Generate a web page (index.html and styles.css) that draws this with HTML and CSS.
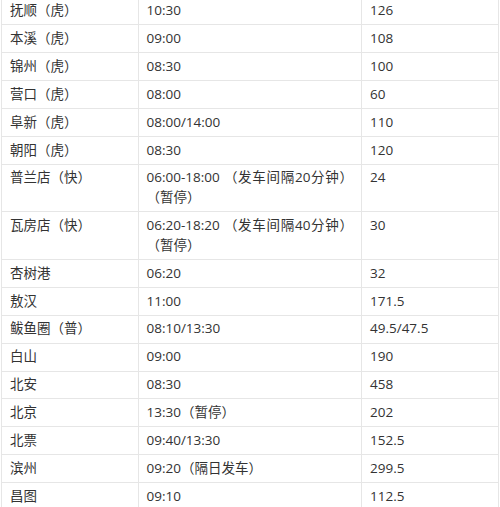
FILE: index.html
```html
<!DOCTYPE html>
<html lang="zh-CN">
<head>
<meta charset="utf-8">
<link rel="stylesheet" href="styles.css">
</head>
<body>
<table class="schedule">
<colgroup><col class="c1"><col class="c2"><col class="c3"></colgroup>
<tbody>
<tr><td>抚顺（虎）</td><td>10:30</td><td>126</td></tr>
<tr><td>本溪（虎）</td><td>09:00</td><td>108</td></tr>
<tr><td>锦州（虎）</td><td>08:30</td><td>100</td></tr>
<tr><td>营口（虎）</td><td>08:00</td><td>60</td></tr>
<tr><td>阜新（虎）</td><td>08:00/14:00</td><td>110</td></tr>
<tr><td>朝阳（虎）</td><td>08:30</td><td>120</td></tr>
<tr><td>普兰店（快）</td><td>06:00-18:00 （发车间隔20分钟）（暂停）</td><td>24</td></tr>
<tr><td>瓦房店（快）</td><td>06:20-18:20 （发车间隔40分钟）（暂停）</td><td>30</td></tr>
<tr><td>杏树港</td><td>06:20</td><td>32</td></tr>
<tr><td>敖汉</td><td>11:00</td><td>171.5</td></tr>
<tr><td>鲅鱼圈（普）</td><td>08:10/13:30</td><td>49.5/47.5</td></tr>
<tr><td>白山</td><td>09:00</td><td>190</td></tr>
<tr><td>北安</td><td>08:30</td><td>458</td></tr>
<tr><td>北京</td><td>13:30（暂停）</td><td>202</td></tr>
<tr><td>北票</td><td>09:40/13:30</td><td>152.5</td></tr>
<tr><td>滨州</td><td>09:20（隔日发车）</td><td>299.5</td></tr>
<tr><td>昌图</td><td>09:10</td><td>112.5</td></tr>
</tbody>
</table>
</body>
</html>
```
FILE: styles.css
```css
html, body {
  margin: 0;
  padding: 0;
  background: #fff;
  overflow: hidden;
}
.schedule {
  border-collapse: collapse;
  table-layout: fixed;
  width: 497px;
  margin: -3.5px 0 0 1px;
  font-family: "Open Sans", "Noto Sans CJK SC", sans-serif;
  font-size: 13.5px;
  color: #333;
}
.c1 { width: 136.5px; }
.c2 { width: 223.5px; }
.c3 { width: 137px; }
.schedule td {
  border: 1px solid #e6e6e6;
  padding: 3.6px 8px;
  line-height: 19.7px;
  vertical-align: top;
  text-align: justify;
}
```
